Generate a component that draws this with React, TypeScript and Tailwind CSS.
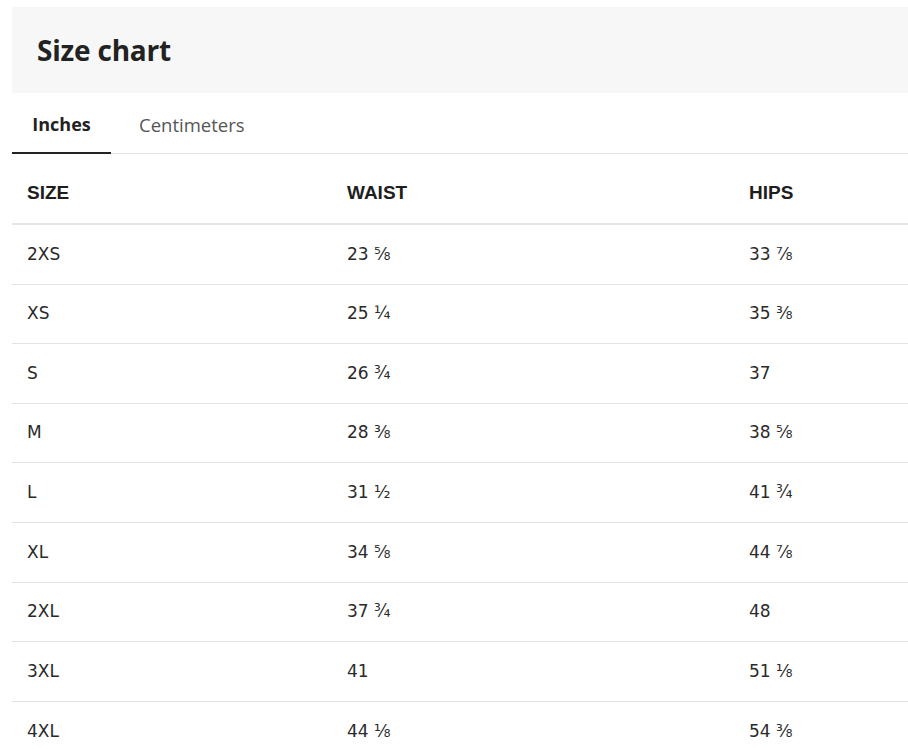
import { useState } from "react";

const rows: [string, string, string][] = [
  ["2XS", "23 ⅝", "33 ⅞"],
  ["XS", "25 ¼", "35 ⅜"],
  ["S", "26 ¾", "37"],
  ["M", "28 ⅜", "38 ⅝"],
  ["L", "31 ½", "41 ¾"],
  ["XL", "34 ⅝", "44 ⅞"],
  ["2XL", "37 ¾", "48"],
  ["3XL", "41", "51 ⅛"],
  ["4XL", "44 ⅛", "54 ⅜"],
];

export default function App() {
  const [unit, setUnit] = useState<"in" | "cm">("in");

  return (
    <div className="min-h-screen bg-white pl-3 pt-[7px] font-['Open_Sans',sans-serif] text-[#222]">
      {/* Header */}
      <div className="flex h-[86px] items-center bg-[#f7f7f7] px-[25px]">
        <h1 className="text-[28px] font-bold tracking-[-0.2px]">Size chart</h1>
      </div>

      {/* Tabs */}
      <div className="flex h-[61px] items-stretch border-b border-[#e3e3e3] pt-[3px]">
        <button
          onClick={() => setUnit("in")}
          className={
            unit === "in"
              ? "-mb-px flex w-[99px] items-center justify-center border-b-2 border-[#222] text-[18px] font-bold"
              : "-mb-px flex w-[99px] items-center justify-center text-[18px] text-[#555]"
          }
        >
          Inches
        </button>
        <button
          onClick={() => setUnit("cm")}
          className={
            unit === "cm"
              ? "-mb-px flex items-center px-7 border-b-2 border-[#222] text-[18.5px] font-bold"
              : "-mb-px flex items-center px-7 text-[18.5px] text-[#555]"
          }
        >
          Centimeters
        </button>
      </div>

      {/* Table */}
      <div className="grid h-[71px] grid-cols-[320px_402px_1fr] items-center border-b-2 border-[#e6e6e6] px-[15px] pt-[10px] font-['Liberation_Sans',Arial,sans-serif] text-[19px] font-bold text-[#1e1e1e]">
        <div>SIZE</div>
        <div>WAIST</div>
        <div>HIPS</div>
      </div>
      {rows.map(([size, waist, hips]) => (
        <div
          key={size}
          className="grid h-[59.6px] grid-cols-[320px_402px_1fr] items-center border-b border-[#e3e3e3] px-[15px] font-['DejaVu_Sans',sans-serif] text-[17px] text-[#2a2a2a] last:border-b-0"
        >
          <div>{size}</div>
          <div>{waist}</div>
          <div>{hips}</div>
        </div>
      ))}
    </div>
  );
}
